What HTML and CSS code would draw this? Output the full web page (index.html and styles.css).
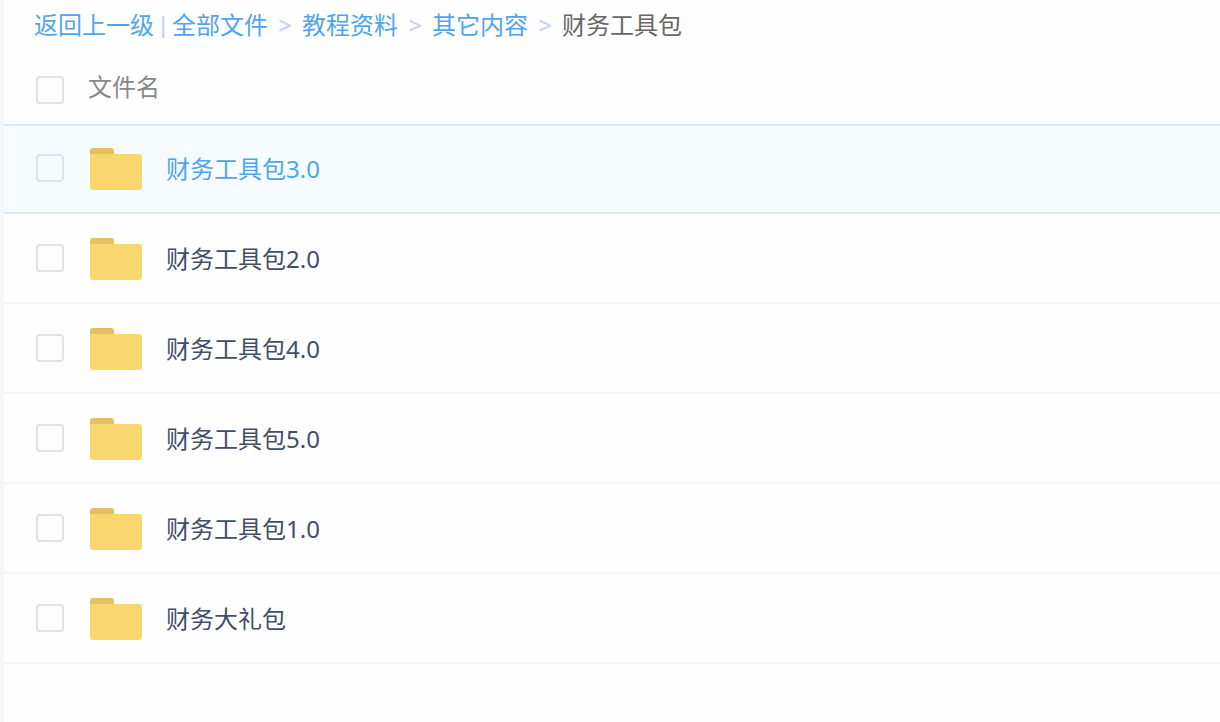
FILE: index.html
```html
<!DOCTYPE html>
<html lang="zh-CN">

<head>
    <meta charset="UTF-8">
    <meta name="viewport" content="width=device-width, initial-scale=1.0">
    <title>财务工具包</title>
    <link rel="stylesheet" href="styles.css">
</head>

<body>
    <svg class="sprite" aria-hidden="true">
        <symbol id="folder" viewBox="0 0 52 42">
            <path fill="#e5c062" d="M0 10V3a3 3 0 0 1 3-3h18a3 3 0 0 1 3 3v7z" />
            <path fill="#fad66f" d="M0 6h49a3 3 0 0 1 3 3v30a3 3 0 0 1-3 3H3a3 3 0 0 1-3-3z" />
        </symbol>
    </svg>

    <main class="container">
        <nav class="breadcrumb">
            <a href="#">返回上一级</a>
            <span class="divider">|</span>
            <a href="#">全部文件</a>
            <span class="arrow">&gt;</span>
            <a href="#">教程资料</a>
            <span class="arrow">&gt;</span>
            <a href="#">其它内容</a>
            <span class="arrow">&gt;</span>
            <span class="current">财务工具包</span>
        </nav>

        <table class="file-list">
            <thead>
                <tr>
                    <th class="check"><input type="checkbox" id="all" aria-label="全选"></th>
                    <th><label for="all">文件名</label></th>
                </tr>
            </thead>
            <tbody>
                <tr class="active">
                    <td class="check"><input type="checkbox" aria-labelledby="file1"></td>
                    <td class="name"><a class="file" id="file1" href="#"><svg class="icon"><use href="#folder" /></svg>财务工具包3.0</a></td>
                </tr>
                <tr>
                    <td class="check"><input type="checkbox" aria-labelledby="file2"></td>
                    <td class="name"><a class="file" id="file2" href="#"><svg class="icon"><use href="#folder" /></svg>财务工具包2.0</a></td>
                </tr>
                <tr>
                    <td class="check"><input type="checkbox" aria-labelledby="file3"></td>
                    <td class="name"><a class="file" id="file3" href="#"><svg class="icon"><use href="#folder" /></svg>财务工具包4.0</a></td>
                </tr>
                <tr>
                    <td class="check"><input type="checkbox" aria-labelledby="file4"></td>
                    <td class="name"><a class="file" id="file4" href="#"><svg class="icon"><use href="#folder" /></svg>财务工具包5.0</a></td>
                </tr>
                <tr>
                    <td class="check"><input type="checkbox" aria-labelledby="file5"></td>
                    <td class="name"><a class="file" id="file5" href="#"><svg class="icon"><use href="#folder" /></svg>财务工具包1.0</a></td>
                </tr>
                <tr>
                    <td class="check"><input type="checkbox" aria-labelledby="file6"></td>
                    <td class="name"><a class="file" id="file6" href="#"><svg class="icon"><use href="#folder" /></svg>财务大礼包</a></td>
                </tr>
            </tbody>
        </table>
    </main>
</body>

</html>
```
FILE: styles.css
```css
* {
    box-sizing: border-box;
}

body {
    margin: 0;
    font-family: "Noto Sans", "Noto Sans CJK SC", sans-serif;
    font-size: 24px;
    line-height: 36px;
    color: #424e67;
    background-color: #fefefe;
}

a {
    color: #4ea5ee;
    text-decoration: none;
}

.sprite {
    display: none;
}

.container {
    min-height: 100vh;
    border-left: 4px solid #f7f7f7;
}

.breadcrumb {
    display: flex;
    align-items: center;
    height: 50px;
    padding-left: 30px;
}

.divider,
.arrow {
    color: #c4d3f2;
    font-weight: 500;
}

.divider {
    width: 18px;
    text-align: center;
    font-family: "Liberation Sans", sans-serif;
}

.arrow {
    width: 34px;
    text-align: center;
}

.current {
    color: #666;
}

.file-list {
    width: 100%;
    border-collapse: separate;
    border-spacing: 0;
}

.file-list th {
    height: 74px;
    padding: 0;
    color: #888;
    font-weight: normal;
    text-align: left;
}

.file-list td {
    height: 90px;
    padding: 0;
    border-bottom: 2px solid #f2f5fa;
}

.file-list .check {
    width: 84px;
    padding-left: 32px;
}

.file-list th.check {
    padding-top: 6px;
}

.file-list .name {
    padding: 2px 0 0 2px;
}

.file-list input {
    display: block;
    appearance: none;
    width: 28px;
    height: 28px;
    margin: 0;
    border: 2px solid #dfe2ea;
    border-radius: 4px;
}

.file-list input:checked {
    border-color: #4ea5ee;
    background-color: #4ea5ee;
}

.file {
    display: flex;
    align-items: center;
    gap: 24px;
    color: #424e67;
}

.icon {
    width: 52px;
    height: 42px;
}

.file-list .active td {
    border-top: 2px solid #dce8fa;
    border-bottom-color: #dce8fa;
    background-color: #f5fbff;
}

.file-list .active .check {
    padding-bottom: 2px;
}

.file-list .active .name {
    padding-top: 0;
}

.active .file,
.file:hover {
    color: #4ea5ee;
}
```
